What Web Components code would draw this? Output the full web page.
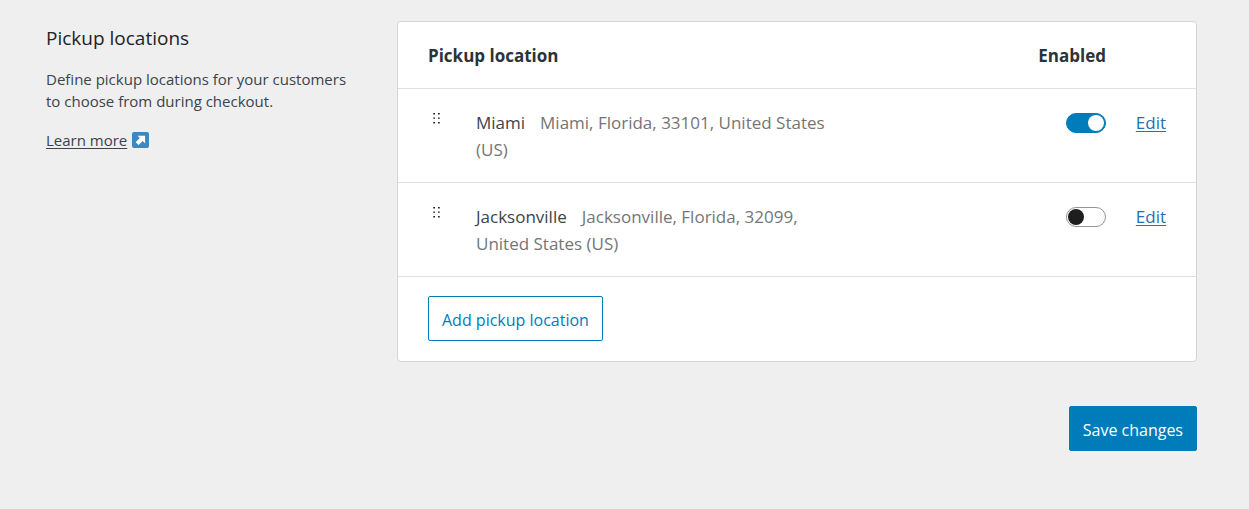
<!DOCTYPE html>
<html lang="en">
<head>
<meta charset="utf-8">
<meta name="viewport" content="width=device-width, initial-scale=1">
<title>Pickup locations</title>
<style>
  body {
    margin: 0;
    background: #efefef;
    color: #3c434a;
    font-family: "Open Sans", "Noto Sans", sans-serif;
    font-size: 15px;
    line-height: 22px;
  }
</style>
</head>
<body>
<settings-page>
  <settings-intro slot="intro" heading="Pickup locations" link="Learn more" href="#learn-more">
    Define pickup locations for your customers to choose from during checkout.
  </settings-intro>
  <pickup-locations></pickup-locations>
  <main-button slot="actions" variant="primary">Save changes</main-button>
</settings-page>

<script>
class SettingsPage extends HTMLElement {
  constructor() {
    super();
    this.attachShadow({ mode: 'open' });
  }

  connectedCallback() {
    this.shadowRoot.innerHTML = `
      <style>
        :host {
          display: block;
          padding: 21px 52px 58px 46px;
        }

        .section {
          display: grid;
          grid-template-columns: minmax(0, 2fr) minmax(0, 5fr);
          column-gap: 31px;
          align-items: start;
        }

        .actions {
          display: flex;
          justify-content: flex-end;
          margin-top: 44px;
        }
      </style>
      <div class="section">
        <slot name="intro"></slot>
        <slot></slot>
      </div>
      <div class="actions"><slot name="actions"></slot></div>
    `;
  }
}

class SettingsIntro extends HTMLElement {
  constructor() {
    super();
    this.attachShadow({ mode: 'open' });
  }

  connectedCallback() {
    this.shadowRoot.innerHTML = `
      <style>
        :host {
          display: block;
          padding-right: 10px;
        }

        h2 {
          margin: 4px 0 16px;
          color: #1d2327;
          font-size: 19px;
          font-weight: 400;
          line-height: 27px;
        }

        p {
          margin: 0 0 17px;
        }

        a {
          color: inherit;
          text-underline-offset: 2px;
        }

        .more {
          display: flex;
          align-items: center;
          gap: 5px;
        }
      </style>
      <h2>${this.getAttribute('heading')}</h2>
      <p><slot></slot></p>
      <div class="more">
        <a href="${this.getAttribute('href')}">${this.getAttribute('link')}</a>
        <svg width="17" height="17" viewBox="0 0 17 17" aria-hidden="true">
          <rect width="17" height="16" rx="2" fill="#3b88c3"/>
          <path d="M5.5 3.8h7.6v7.6l-2.3-2.3-4.2 3.9-3-2.8 4.2-4.1z" fill="#fff"/>
        </svg>
      </div>
    `;
  }
}

class DragHandle extends HTMLElement {
  constructor() {
    super();
    this.attachShadow({ mode: 'open' });
  }

  connectedCallback() {
    this.shadowRoot.innerHTML = `
      <style>
        :host {
          display: block;
          width: 18px;
          height: 18px;
          color: #1e1e1e;
          cursor: grab;
        }

        svg {
          display: block;
        }
      </style>
      <svg width="18" height="18" viewBox="0 0 18 18" fill="currentColor" aria-hidden="true">
        <path d="M5.3 4h1.7v1.4H5.3zM10 4h1.7v1.4H10zM5.3 8.4h1.7v1.4H5.3zM10 8.4h1.7v1.4H10zM5.3 13h1.7v1.4H5.3zM10 13h1.7v1.4H10z"/>
      </svg>
    `;
  }
}

class ToggleSwitch extends HTMLElement {
  constructor() {
    super();
    this.attachShadow({ mode: 'open' });
  }

  connectedCallback() {
    const checked = this.hasAttribute('checked') ? 'checked' : '';

    this.shadowRoot.innerHTML = `
      <style>
        :host {
          display: inline-block;
          vertical-align: top;
        }

        input {
          appearance: none;
          display: flex;
          align-items: center;
          box-sizing: border-box;
          width: 40px;
          height: 20px;
          margin: 4px 0 0;
          padding: 0 1px;
          border: 1px solid #949494;
          border-radius: 10px;
          background: #fff;
          cursor: pointer;
        }

        input::before {
          content: "";
          width: 16px;
          height: 16px;
          border-radius: 50%;
          background: #1e1e1e;
        }

        input:checked {
          justify-content: flex-end;
          border-color: #007cba;
          background: #007cba;
        }

        input:checked::before {
          background: #fff;
        }
      </style>
      <input type="checkbox" role="switch" aria-label="${this.getAttribute('label')}" ${checked}>
    `;
  }
}

class MainButton extends HTMLElement {
  constructor() {
    super();
    this.attachShadow({ mode: 'open' });
  }

  connectedCallback() {
    this.shadowRoot.innerHTML = `
      <style>
        :host {
          display: inline-block;
          vertical-align: top;
        }

        button {
          display: block;
          box-sizing: border-box;
          height: 45px;
          padding: 3px 13px 0;
          border: 1px solid #007cba;
          border-radius: 2px;
          background: transparent;
          color: #007cba;
          font: inherit;
          font-size: 16px;
          white-space: nowrap;
          cursor: pointer;
        }

        :host([variant="primary"]) button {
          background: #007cba;
          color: #fff;
        }
      </style>
      <button type="button"><slot></slot></button>
    `;
  }
}

class PickupLocations extends HTMLElement {
  constructor() {
    super();
    this.attachShadow({ mode: 'open' });
    this.locations = [
      { name: 'Miami', address: 'Miami, Florida, 33101, United States (US)', enabled: true },
      { name: 'Jacksonville', address: 'Jacksonville, Florida, 32099, United States (US)', enabled: false }
    ];
  }

  renderRow(location) {
    return `
      <tr>
        <td class="handle"><drag-handle></drag-handle></td>
        <td class="place"><span class="name">${location.name}</span><span>${location.address}</span></td>
        <td class="enabled">
          <toggle-switch label="Enable ${location.name}" ${location.enabled ? 'checked' : ''}></toggle-switch>
        </td>
        <td class="edit"><a href="#edit">Edit</a></td>
      </tr>
    `;
  }

  connectedCallback() {
    this.shadowRoot.innerHTML = `
      <style>
        :host {
          display: block;
          border: 1px solid #d5d5d5;
          border-radius: 4px;
          background: #fff;
        }

        table {
          width: 100%;
          border-collapse: separate;
          border-spacing: 0;
          table-layout: fixed;
          font-size: 17px;
          line-height: 27px;
        }

        col.handle {
          width: 78px;
        }

        col.place {
          width: 46%;
        }

        col.edit {
          width: 90px;
        }

        th, td {
          padding: 20px 0 19px;
          border-bottom: 1px solid #e0e0e0;
          text-align: left;
          vertical-align: top;
        }

        th {
          color: #2c3338;
          font-weight: 700;
        }

        th:first-child, td.handle {
          padding-left: 30px;
        }

        td.place {
          color: #757575;
        }

        .name {
          margin-right: 15px;
          color: #3c434a;
        }

        th.enabled, td.enabled {
          text-align: right;
        }

        td.edit {
          padding-right: 30px;
          text-align: right;
        }

        a {
          color: #2271b1;
          text-underline-offset: 2px;
        }

        .footer {
          padding: 19px 30px 20px;
        }
      </style>
      <table>
        <colgroup>
          <col class="handle"><col class="place"><col><col class="edit">
        </colgroup>
        <thead>
          <tr>
            <th colspan="2">Pickup location</th>
            <th class="enabled">Enabled</th>
            <th></th>
          </tr>
        </thead>
        <tbody>${this.locations.map(location => this.renderRow(location)).join('')}</tbody>
      </table>
      <div class="footer"><main-button>Add pickup location</main-button></div>
    `;
  }
}

customElements.define('drag-handle', DragHandle);
customElements.define('toggle-switch', ToggleSwitch);
customElements.define('main-button', MainButton);
customElements.define('settings-intro', SettingsIntro);
customElements.define('pickup-locations', PickupLocations);
customElements.define('settings-page', SettingsPage);
</script>
</body>
</html>
